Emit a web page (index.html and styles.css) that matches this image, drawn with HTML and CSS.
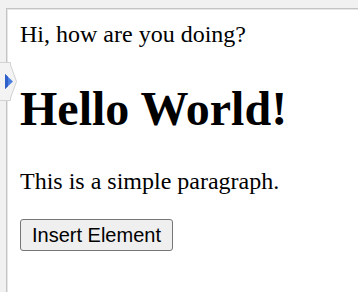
FILE: index.html
```html
<!DOCTYPE html>
<html>
<head>
<meta charset="utf-8">
<link rel="stylesheet" href="styles.css">
</head>
<body>
<div class="frame">
  <div class="doc">
    <div class="greet">Hi, how are you doing?</div>
    <h1 class="title">Hello World!</h1>
    <p class="para">This is a simple paragraph.</p>
    <button class="btn">Insert Element</button>
  </div>
</div>
<div class="tab">
  <svg width="18" height="40" viewBox="0 0 18 40">
    <path d="M0 0.5 H10.5 V3 L16.5 19.5 L10.5 36 V38.5 H0" fill="#f3f3f3" stroke="#d2d2d2" stroke-width="1"/>
    <path d="M5 12 L13 19.5 L5 27 Z" fill="#4a7ee0"/>
    <path d="M5 12 L8 14.8 V24.2 L5 27 Z" fill="#2f5fc8"/>
  </svg>
</div>
</body>
</html>
```
FILE: styles.css
```css
html, body {
  margin: 0;
  padding: 0;
  width: 358px;
  height: 292px;
  overflow: hidden;
  background: #f1f1f1;
}
body {
  position: relative;
  padding: 8px 0 0 6px;
  box-sizing: border-box;
}
.frame {
  height: 284px;
  background: #fff;
  border-top: 1px solid #c4c4c4;
  border-left: 1px solid #c4c4c4;
  box-shadow: inset 1px 1px 0 #e6e6e6;
}
.doc {
  padding: 12px 13px;
  font-family: "Liberation Serif", "Times New Roman", serif;
  font-size: 24px;
  color: #000;
}
.greet {
  line-height: 27.6px;
}
.title {
  font-size: 48px;
  font-weight: bold;
  margin: 32px 0;
  line-height: 55px;
}
.para {
  margin: 24px 0;
  line-height: 27.6px;
}
.btn {
  font-family: "Liberation Sans", Arial, sans-serif;
  font-size: 20px;
  color: #000;
  background: #efefef;
  border: 1px solid #767676;
  border-radius: 3px;
  padding: 3.5px 11px;
  line-height: 23px;
  margin: 0;
}
.tab {
  position: absolute;
  left: 0;
  top: 62px;
  line-height: 0;
}
```
